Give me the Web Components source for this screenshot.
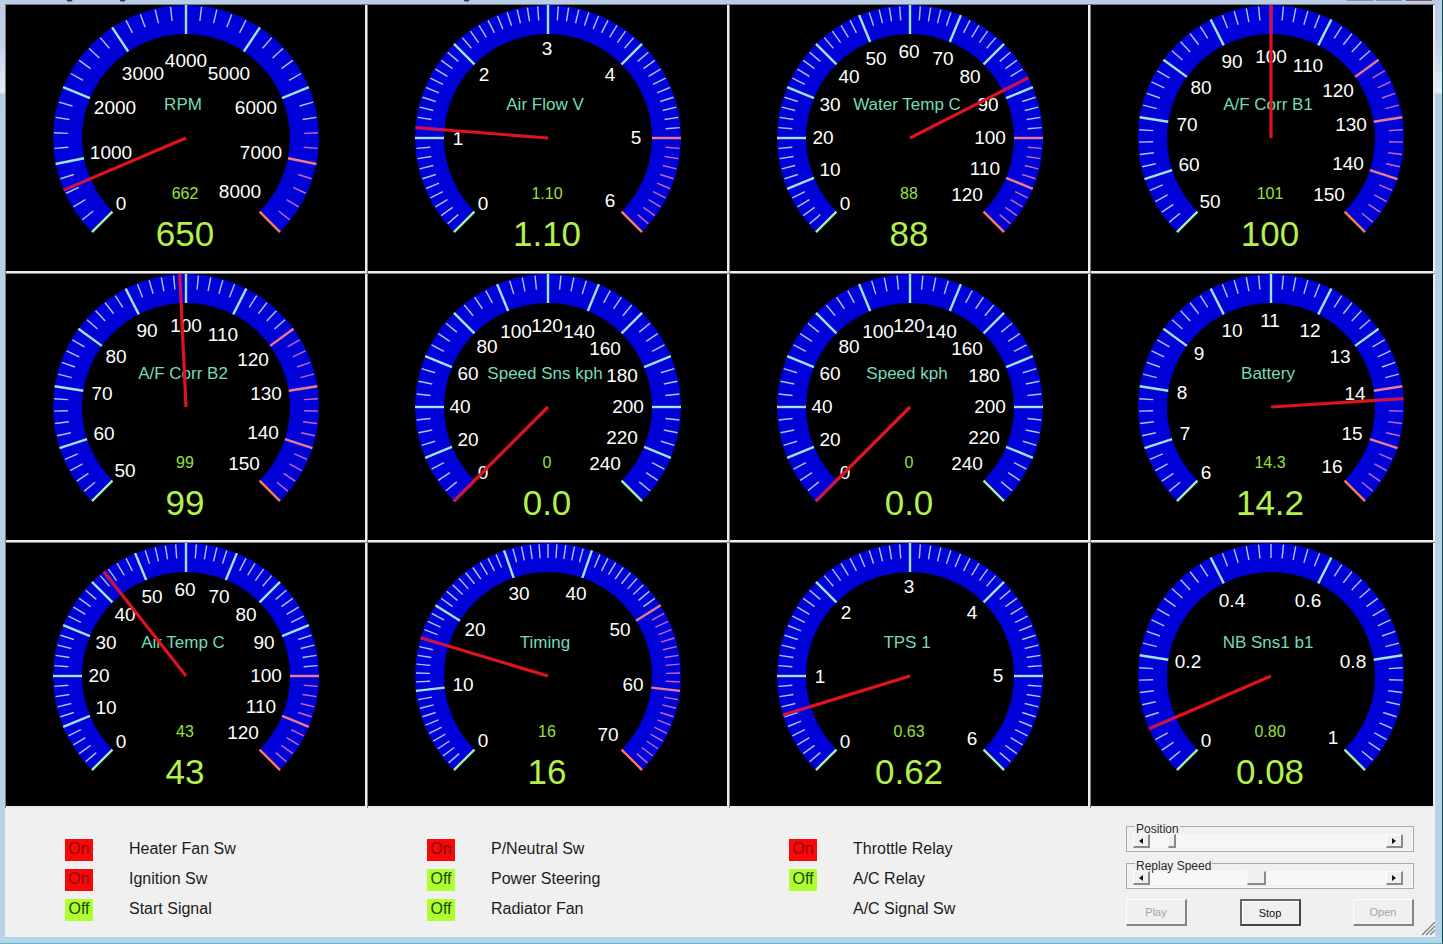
<!DOCTYPE html>
<html lang="en">
<head>
<meta charset="utf-8">
<title>Engine Monitor</title>
<style>
html, body { margin: 0; }
body { font-family: "Liberation Sans", Arial, sans-serif; background: #b9d1ea; }
</style>
</head>
<body>
<monitor-window>
  <gauge-dial name="RPM" min="0" max="8000" major="1000" divisions="5" red="6600" scale="rpm" value="650" logged="662"></gauge-dial>
  <gauge-dial name="Air Flow V" min="0" max="6" major="1" divisions="10" red="5" scale="six" value="1.10" logged="1.10"></gauge-dial>
  <gauge-dial name="Water Temp C" min="0" max="120" major="10" divisions="5" red="100" scale="temp" value="88" logged="88"></gauge-dial>
  <gauge-dial name="A/F Corr B1" min="50" max="150" major="10" divisions="5" red="120" scale="corr" value="100" logged="101"></gauge-dial>
  <gauge-dial name="A/F Corr B2" min="50" max="150" major="10" divisions="5" red="120" scale="corr" value="99" logged="99"></gauge-dial>
  <gauge-dial name="Speed Sns kph" min="0" max="240" major="20" divisions="4" scale="speed" value="0.0" logged="0"></gauge-dial>
  <gauge-dial name="Speed kph" min="0" max="240" major="20" divisions="4" scale="speed" value="0.0" logged="0"></gauge-dial>
  <gauge-dial name="Battery" min="6" max="16" major="1" divisions="5" red="14" scale="volts" value="14.2" logged="14.3"></gauge-dial>
  <gauge-dial name="Air Temp C" min="0" max="120" major="10" divisions="5" red="100" scale="temp" value="43" logged="43"></gauge-dial>
  <gauge-dial name="Timing" min="0" max="70" major="10" divisions="10" red="50" scale="timing" value="16" logged="16"></gauge-dial>
  <gauge-dial name="TPS 1" min="0" max="6" major="1" divisions="10" scale="six" value="0.62" logged="0.63"></gauge-dial>
  <gauge-dial name="NB Sns1 b1" min="0" max="1" major="0.2" divisions="10" scale="narrow" value="0.08" logged="0.80"></gauge-dial>

  <switch-group slot="panel">
    <switch-lamp state="On">Heater Fan Sw</switch-lamp>
    <switch-lamp state="On">Ignition Sw</switch-lamp>
    <switch-lamp state="Off">Start Signal</switch-lamp>
  </switch-group>
  <switch-group slot="panel">
    <switch-lamp state="On">P/Neutral Sw</switch-lamp>
    <switch-lamp state="Off">Power Steering</switch-lamp>
    <switch-lamp state="Off">Radiator Fan</switch-lamp>
  </switch-group>
  <switch-group slot="panel">
    <switch-lamp state="On">Throttle Relay</switch-lamp>
    <switch-lamp state="Off">A/C Relay</switch-lamp>
    <switch-lamp>A/C Signal Sw</switch-lamp>
  </switch-group>
  <replay-controls slot="panel"></replay-controls>
</monitor-window>

<script>
/* Base: clones the class's markup into an open shadow root. */
class Part extends HTMLElement {
  constructor() {
    super();
    const t = document.createElement('template');
    t.innerHTML = this.constructor.markup;
    this.attachShadow({ mode: 'open' }).append(t.content.cloneNode(true));
  }
}

class MonitorWindow extends Part {
  static markup = `
    <style>
      :host { display: flex; flex-direction: column; min-height: 100vh; box-sizing: border-box; position: relative;
        padding: 0 7px 6px 5px; border-right: 1px solid #12484c; border-bottom: 1px solid #5bbccd;
        background: linear-gradient(#bccde4 0, #bfd0e8 40px, #e4edf8 92px, #b9cde8 94px, #b8d2ec 100%); }
      header { height: 4px; background: #b9cde6; overflow: hidden; display: flex; justify-content: space-between; }
      header svg { display: block; flex: none; }
      .cols { display: grid; grid-template-columns: 362fr 362fr 361fr 345fr; }
      .dials { grid-template-rows: 269px 269px 266px; }
      .panel { flex: 1; background: #f0f0f0; position: relative; }
      .grip { position: absolute; right: 0; bottom: 1px; }
    </style>
    <header>
      <svg width="480" height="4" fill="none" stroke="#2b3650" aria-hidden="true">
        <path d="M62 0q3 1 5 0M115 0q3 1 5 0M459 0q3 1 5 0" stroke-width="2"/>
      </svg>
      <svg width="90" height="4" aria-hidden="true">
        <path fill="#7f93b0" d="M2 0h26v1H2zM31 0h26v1H31z"/><path fill="#8d5560" d="M61 0h26v1H61z"/>
      </svg>
    </header>
    <main class="cols dials"><slot></slot></main>
    <section class="cols panel">
      <slot name="panel"></slot>
      <svg class="grip" width="14" height="14" fill="none" aria-hidden="true">
        <path stroke="#fff" d="M0 13L13 0M4 13L13 4M8 13L13 8"/>
        <path stroke="#808080" stroke-width="1.4" d="M1 13L14 0M5 13L14 4M9 13L14 8"/>
      </svg>
    </section>`;
}

/* Scale labels: [text, x, y] of each number's middle, measured from the dial's hub. */
const SCALES = {
  rpm: [['0',-65,65],['1000',-75,14],['2000',-71,-31],['3000',-43,-65],['4000',0,-78],['5000',43,-65],['6000',70,-31],['7000',75,14],['8000',54,53]],
  six: [['0',-65,65],['1',-90,0],['2',-64,-64],['3',-1,-90],['4',62,-64],['5',88,-1],['6',62,62]],
  temp: [['0',-65,65],['10',-80,31],['20',-87,-1],['30',-80,-34],['40',-61,-62],['50',-34,-80],['60',-1,-87],['70',33,-80],['80',60,-62],['90',78,-34],['100',80,-1],['110',75,30],['120',57,56]],
  corr: [['50',-61,63],['60',-82,26],['70',-84,-14],['80',-70,-51],['90',-39,-77],['100',0,-82],['110',37,-73],['120',67,-48],['130',80,-14],['140',77,25],['150',58,56]],
  speed: [['0',-65,65],['20',-80,32],['40',-88,-1],['60',-80,-34],['80',-61,-61],['100',-32,-76],['120',-1,-82],['140',31,-76],['160',57,-59],['180',74,-32],['200',80,-1],['220',74,30],['240',57,56]],
  volts: [['6',-65,65],['7',-86,26],['8',-89,-15],['9',-72,-54],['10',-39,-77],['11',-1,-87],['12',39,-77],['13',69,-51],['14',84,-14],['15',81,26],['16',61,59]],
  timing: [['0',-65,64],['10',-85,8],['20',-73,-47],['30',-29,-83],['40',28,-83],['50',72,-47],['60',85,8],['70',60,58]],
  narrow: [['0',-65,64],['0.2',-83,-15],['0.4',-39,-76],['0.6',37,-76],['0.8',82,-15],['1',62,61]]
};

class GaugeDial extends Part {
  static markup = `
    <style>
      :host { display: block; overflow: hidden; background: #000; min-width: 0;
        border: solid #7d7d7d; border-width: 1px 0 0 1px; }
      div { height: 100%; box-sizing: border-box; overflow: hidden; border: solid #ededed; border-width: 0 2px 2px 0; }
      svg { display: block; }
      text { text-anchor: middle; fill: #fff; font-size: 19px; }
      .name { fill: #74dcb8; font-size: 17px; }
      .logged { fill: #98e03c; font-size: 16px; }
      .value { fill: #b4f04c; font-size: 35px; }
      .ring { fill: none; stroke: #0000d8; stroke-width: 29; }
      .minor { stroke: #a4c8f0; stroke-width: 1.4; }
      .major { stroke: #a0e4e0; stroke-width: 2.4; }
      .minor.hot { stroke: #c866c8; }
      .major.hot { stroke: #ec7c8c; }
      .end { stroke: #a4f09c; }
      .end.hot { stroke: #f87c50; }
      .needle { stroke: #e0131c; stroke-width: 3.2; }
      .tip { stroke: #d01048; stroke-width: 3.2; }
    </style>
    <div><svg width="358" height="263" viewBox="-180 -133 358 263" role="img"></svg></div>`;

  connectedCallback() {
    const get = n => this.getAttribute(n);
    const min = +get('min'), max = +get('max'), major = +get('major'), div = +get('divisions');
    const red = this.hasAttribute('red') ? +get('red') : Infinity;
    const angle = v => (135 + 270 * (v - min) / (max - min)) * Math.PI / 180;
    const pt = (v, r) => [(Math.cos(angle(v)) * r).toFixed(2), (Math.sin(angle(v)) * r).toFixed(2)];
    const line = (v, r1, r2, cls) => {
      const [x1, y1] = pt(v, r1), [x2, y2] = pt(v, r2);
      return `<line class="${cls}" x1="${x1}" y1="${y1}" x2="${x2}" y2="${y2}"/>`;
    };
    const [ax, ay] = pt(min, 118.5), [bx, by] = pt(max, 118.5);
    let out = `<path class="ring" d="M${ax} ${ay}A118.5 118.5 0 1 1 ${bx} ${by}"/>`;
    const n = Math.round((max - min) / major * div);
    for (let i = 0; i <= n; i++) {
      const v = min + i * major / div;
      const hot = v >= red - 1e-6 ? ' hot' : '';
      const end = i === 0 || i === n ? ' end' : '';
      out += i % div ? line(v, 118, 132, 'minor' + hot) : line(v, 104, 133, 'major' + end + hot);
    }
    for (const [t, x, y] of SCALES[get('scale')]) out += `<text x="${x}" y="${y + 7}">${t}</text>`;
    out += `<text class="name" x="-3" y="-28">${get('name')}</text>
      <text class="logged" x="-1" y="61">${get('logged')}</text>
      <text class="value" x="-1" y="108">${get('value')}</text>`;
    const v = +get('value');
    out += line(v, 0, 105, 'needle') + line(v, 104, 133, 'tip');
    const svg = this.shadowRoot.querySelector('svg');
    svg.setAttribute('aria-label', get('name'));
    svg.innerHTML = out;
  }
}

class SwitchGroup extends Part {
  static markup = `
    <style>
      :host { display: flex; flex-direction: column; gap: 8px; padding: 31px 0 0 60px; min-width: 0; }
    </style><slot></slot>`;
}

class SwitchLamp extends Part {
  static markup = `
    <style>
      :host { display: flex; gap: 36px; height: 22px; font-size: 16px; line-height: 20px; color: #1c1c1c; white-space: nowrap; }
      b { font-weight: normal; width: 28px; text-align: center; }
      :host([state="On"]) b { background: #f80808; color: #8a0808; }
      :host([state="Off"]) b { background: #adff2f; color: #1e4408; }
    </style><b></b><span><slot></slot></span>`;
  connectedCallback() {
    this.shadowRoot.querySelector('b').textContent = this.getAttribute('state') || '';
  }
}

class ScrollSlider extends Part {
  static markup = `
    <style>
      :host { display: block; }
      fieldset { margin: 0; min-width: 0; padding: 5px 10px 3px 6px; border: 1px solid #a9a9a9; box-shadow: inset -1px -1px #fbfbfb; }
      legend { position: relative; z-index: 1; height: 6px; line-height: 12px; font-size: 12px; padding: 0 1px; margin-left: 2px; color: #2a2a2a; }
      .bar { display: flex; height: 14px; background: #f7f7f7; }
      button { width: 17px; padding: 0; border: solid; border-width: 1px 2px 2px 1px; border-color: #fff #8a8a8a #8a8a8a #fff;
        background: #f0f0f0; display: grid; place-items: center; }
      input { appearance: none; flex: 1; min-width: 0; margin: 0; height: 14px; background: #f7f7f7; }
      input::-webkit-slider-thumb { appearance: none; box-sizing: border-box; width: var(--thumb, 19px); height: 14px;
        background: #f0f0f0; border: solid; border-width: 1px 2px 2px 1px; border-color: #f4f4f4 #8a8a8a #8a8a8a #f4f4f4; }
    </style>
    <fieldset><legend></legend>
      <div class="bar">
        <button type="button" aria-label="Decrease"><svg width="4" height="6"><path d="M4 0v6L0 3z" fill="#111"/></svg></button>
        <input type="range" min="0" max="1000">
        <button type="button" aria-label="Increase"><svg width="4" height="6"><path d="M0 0v6L4 3z" fill="#111"/></svg></button>
      </div>
    </fieldset>`;
  connectedCallback() {
    const label = this.getAttribute('label');
    const input = this.shadowRoot.querySelector('input');
    this.shadowRoot.querySelector('legend').textContent = label;
    input.setAttribute('aria-label', label);
    input.value = this.getAttribute('value');
  }
}

class ReplayControls extends Part {
  static markup = `
    <style>
      :host { display: flex; flex-direction: column; padding: 15px 21px 11px 36px; min-width: 0; }
      .short { --thumb: 8px; margin-bottom: 8px; }
      .row { display: flex; justify-content: space-between; margin-top: 10px; }
      button { width: 61px; height: 27px; padding: 0; font: 11px "Liberation Sans", Arial, sans-serif; color: #111;
        background: #f0f0f0; border: solid; border-width: 1px 2px 2px 1px; border-color: #fff #858585 #858585 #fff; }
      button:disabled { color: #a4a4a4; }
      .default { border-width: 2px; border-color: #666 #444 #444 #666; box-shadow: inset 1px 1px #fff; }
    </style>
    <scroll-slider class="short" label="Position" value="80"></scroll-slider>
    <scroll-slider label="Replay Speed" value="445"></scroll-slider>
    <div class="row">
      <button type="button" disabled>Play</button>
      <button type="button" class="default">Stop</button>
      <button type="button" disabled>Open</button>
    </div>`;
}

customElements.define('gauge-dial', GaugeDial);
customElements.define('switch-lamp', SwitchLamp);
customElements.define('switch-group', SwitchGroup);
customElements.define('scroll-slider', ScrollSlider);
customElements.define('replay-controls', ReplayControls);
customElements.define('monitor-window', MonitorWindow);
</script>
</body>
</html>
